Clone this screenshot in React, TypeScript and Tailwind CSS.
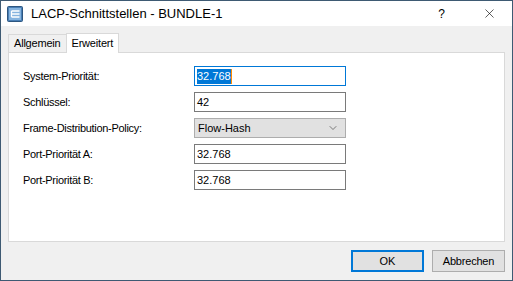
import { ChevronDown, X } from "lucide-react";

const rows = [
    { label: "System-Priorität:", value: "32.768", focused: true },
    { label: "Schlüssel:", value: "42" },
    { label: "Frame-Distribution-Policy:", value: "Flow-Hash", select: true },
    { label: "Port-Priorität A:", value: "32.768" },
    { label: "Port-Priorität B:", value: "32.768" },
];

function AppIcon() {
    return (
        <svg width="16" height="16" viewBox="0 0 16 16">
            <rect x="0.5" y="0.5" width="15" height="15" rx="1" fill="#4a7fb5" stroke="#2d5680" />
            <rect x="2" y="2" width="12" height="12" fill="#86b4df" />
            <path d="M4.5 5h8M4.5 8h8M4.5 11h8M4.5 5v6" stroke="#ffffff" strokeWidth="1.3" fill="none" />
        </svg>
    );
}

export default function App() {
    return (
        <div
            className="w-[513px] h-[281px] border border-[#3e5a73] bg-[#f0f0f0] flex flex-col text-[11px] text-black overflow-hidden"
            style={{ fontFamily: '"Liberation Sans", Arial, sans-serif' }}
        >
            {/* title bar */}
            <div className="h-[25px] bg-white flex items-center pl-[6px] shrink-0">
                <AppIcon />
                <span className="ml-[8px] text-[13px]">LACP-Schnittstellen - BUNDLE-1</span>
                <span className="ml-auto mr-[37px] text-[12px]">?</span>
                <X size={15} strokeWidth={1} className="mr-[15px]" />
            </div>

            {/* tabs */}
            <div className="flex items-end h-[26px] pl-[7px] pt-[7px] tracking-[-0.2px]">
                <div className="h-[18px] px-[5px] border border-b-0 border-[#d9d9d9] flex items-center">Allgemein</div>
                <div className="h-[20px] px-[5px] border border-b-0 border-[#d9d9d9] bg-white flex items-center -ml-px relative top-px">
                    Erweitert
                </div>
            </div>

            {/* panel */}
            <div className="mx-[7px] h-[190px] bg-white border border-[#d9d9d9] pt-[13px] pl-[14px] flex flex-col gap-[6px]">
                {rows.map((r) => (
                    <div key={r.label} className="flex items-center h-[20px]">
                        <span className="w-[171px] tracking-[-0.3px]">{r.label}</span>
                        {r.select ? (
                            <div className="w-[152px] h-[20px] bg-[#e1e1e1] border border-[#adadad] flex items-center pl-[3px] pr-[6px]">
                                <span>{r.value}</span>
                                <ChevronDown size={12} strokeWidth={1.2} className="ml-auto text-[#333]" />
                            </div>
                        ) : (
                            <div
                                className={
                                    "w-[152px] h-[20px] border flex items-center pl-[2px] " +
                                    (r.focused ? "border-[#0078d7]" : "border-[#7a7a7a]")
                                }
                            >
                                {r.focused ? (
                                    <span className="bg-[#0078d7] text-white leading-[15px] border-r border-[#ff8c00]">{r.value}</span>
                                ) : (
                                    <span>{r.value}</span>
                                )}
                            </div>
                        )}
                    </div>
                ))}
            </div>

            {/* buttons */}
            <div className="flex justify-end gap-[8px] pr-[7px] pt-[8px]">
                <button className="w-[73px] h-[22px] bg-[#e1e1e1] border-2 border-[#0078d7]">OK</button>
                <button className="w-[73px] h-[22px] bg-[#e1e1e1] border border-[#adadad] tracking-[-0.2px]">Abbrechen</button>
            </div>
        </div>
    );
}
